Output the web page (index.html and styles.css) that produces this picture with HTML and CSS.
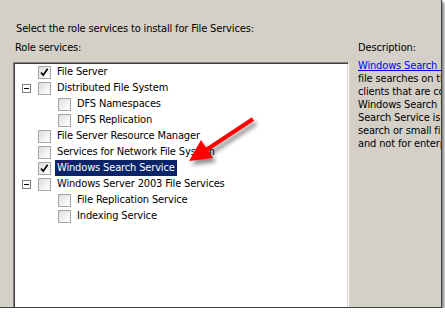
FILE: index.html
```html
<!DOCTYPE html>
<html>
<head>
<meta charset="utf-8">
<link rel="stylesheet" href="styles.css">
</head>
<body>
<div class="frame">
  <div class="intro">Select the role services to install for File Services:</div>
  <div class="columns">
    <div class="left">
      <div class="label">Role services:</div>
      <div class="tree">
        <div class="row"><span class="slot"></span><span class="cb"><svg viewBox="0 0 13 13" width="13" height="13"><path d="M3 6.5 L5.2 9.2 L9.6 2.8" fill="none" stroke="#000" stroke-width="1.7"/></svg></span><span class="text">File Server</span></div>
        <div class="row"><span class="slot"><span class="exp"></span></span><span class="cb"></span><span class="text">Distributed File System</span></div>
        <div class="row lvl1"><span class="slot"></span><span class="cb"></span><span class="text">DFS Namespaces</span></div>
        <div class="row lvl1"><span class="slot"></span><span class="cb"></span><span class="text">DFS Replication</span></div>
        <div class="row"><span class="slot"></span><span class="cb"></span><span class="text">File Server Resource Manager</span></div>
        <div class="row"><span class="slot"></span><span class="cb"></span><span class="text">Services for Network File System</span></div>
        <div class="row"><span class="slot"></span><span class="cb"><svg viewBox="0 0 13 13" width="13" height="13"><path d="M3 6.5 L5.2 9.2 L9.6 2.8" fill="none" stroke="#000" stroke-width="1.7"/></svg></span><span class="text selected">Windows Search Service</span></div>
        <div class="row"><span class="slot"><span class="exp"></span></span><span class="cb"></span><span class="text">Windows Server 2003 File Services</span></div>
        <div class="row lvl1"><span class="slot"></span><span class="cb"></span><span class="text">File Replication Service</span></div>
        <div class="row lvl1"><span class="slot"></span><span class="cb"></span><span class="text">Indexing Service</span></div>
      </div>
    </div>
    <div class="right">
      <div class="label">Description:</div>
      <div class="desc">
        <div class="line"><a class="link" href="#">Windows Search Service</a> provides fast</div>
        <div class="line">file searches on the server from</div>
        <div class="line">clients that are compatible with</div>
        <div class="line">Windows Search Service. Windows</div>
        <div class="line">Search Service is intended for desktop</div>
        <div class="line">search or small file server scenarios,</div>
        <div class="line">and not for enterprise scenarios.</div>
      </div>
    </div>
  </div>
  <svg class="arrow" width="445" height="312" viewBox="0 0 445 312">
    <line x1="253" y1="119" x2="203" y2="152" stroke="#f00" stroke-width="4"/>
    <polygon points="189,161 213,158 201,140" fill="#f00"/>
  </svg>
</div>
</body>
</html>
```
FILE: styles.css
```css
html, body {
  margin: 0;
  padding: 0;
  background: #fff;
}
body {
  font-family: "DejaVu Sans Condensed", "Liberation Sans", sans-serif;
  font-size: 11px;
  letter-spacing: -0.15px;
  color: #000;
}
.frame {
  position: relative;
  width: 441px;
  height: 307px;
  border-right: 1px solid #404040;
  border-bottom: 1px solid #404040;
  background: #d4d0c8;
  overflow: hidden;
  box-shadow: 2px 2px 3px rgba(0,0,0,0.55);
}
.intro {
  padding: 22px 0 0 16px;
  line-height: 13px;
  white-space: nowrap;
}
.columns {
  display: flex;
  margin-top: 6px;
}
.left {
  width: 336px;
  margin-left: 13px;
  flex: none;
}
.label {
  line-height: 13px;
  padding-left: 2px;
  white-space: nowrap;
}
.tree {
  margin-top: 8px;
  height: 260px;
  background: #fff;
  border-top: 1px solid #808080;
  border-left: 1px solid #808080;
  border-right: 1px solid #fff;
  box-shadow: inset 1px 1px 0 #404040, inset -1px 0 0 #d4d0c8;
  padding-top: 1px;
  padding-left: 1px;
}
.row {
  display: flex;
  align-items: center;
  height: 16px;
}
.row.lvl1 {
  padding-left: 20px;
}
.slot {
  width: 23px;
  height: 16px;
  flex: none;
  display: flex;
  align-items: center;
}
.exp {
  margin-left: 7px;
  width: 7px;
  height: 7px;
  border: 1px solid #808080;
  background: #fff;
  position: relative;
}
.exp::after {
  content: "";
  position: absolute;
  left: 1px;
  top: 3px;
  width: 5px;
  height: 1px;
  background: #000;
}
.cb {
  width: 11px;
  height: 11px;
  flex: none;
  border: 1px solid #a6a6a6;
  background: linear-gradient(135deg, #dcdcdc 0%, #f4f4f4 60%, #fff 100%);
  position: relative;
}
.cb svg {
  position: absolute;
  left: -1px;
  top: -1px;
}
.text {
  margin-left: 4px;
  padding: 0 2px;
  line-height: 16px;
  white-space: nowrap;
}
.text.selected {
  background: #0a246a;
  color: #fff;
}
.right {
  margin-left: 7px;
  flex: none;
  width: 200px;
}
.desc {
  margin-top: 5px;
  padding-left: 2px;
}
.line {
  line-height: 13px;
  white-space: nowrap;
}
.link {
  color: #0000ff;
  text-decoration: underline;
}
.arrow {
  position: absolute;
  left: 0;
  top: 0;
  pointer-events: none;
  filter: drop-shadow(3px 4px 2px rgba(0,0,0,0.45));
}
```
